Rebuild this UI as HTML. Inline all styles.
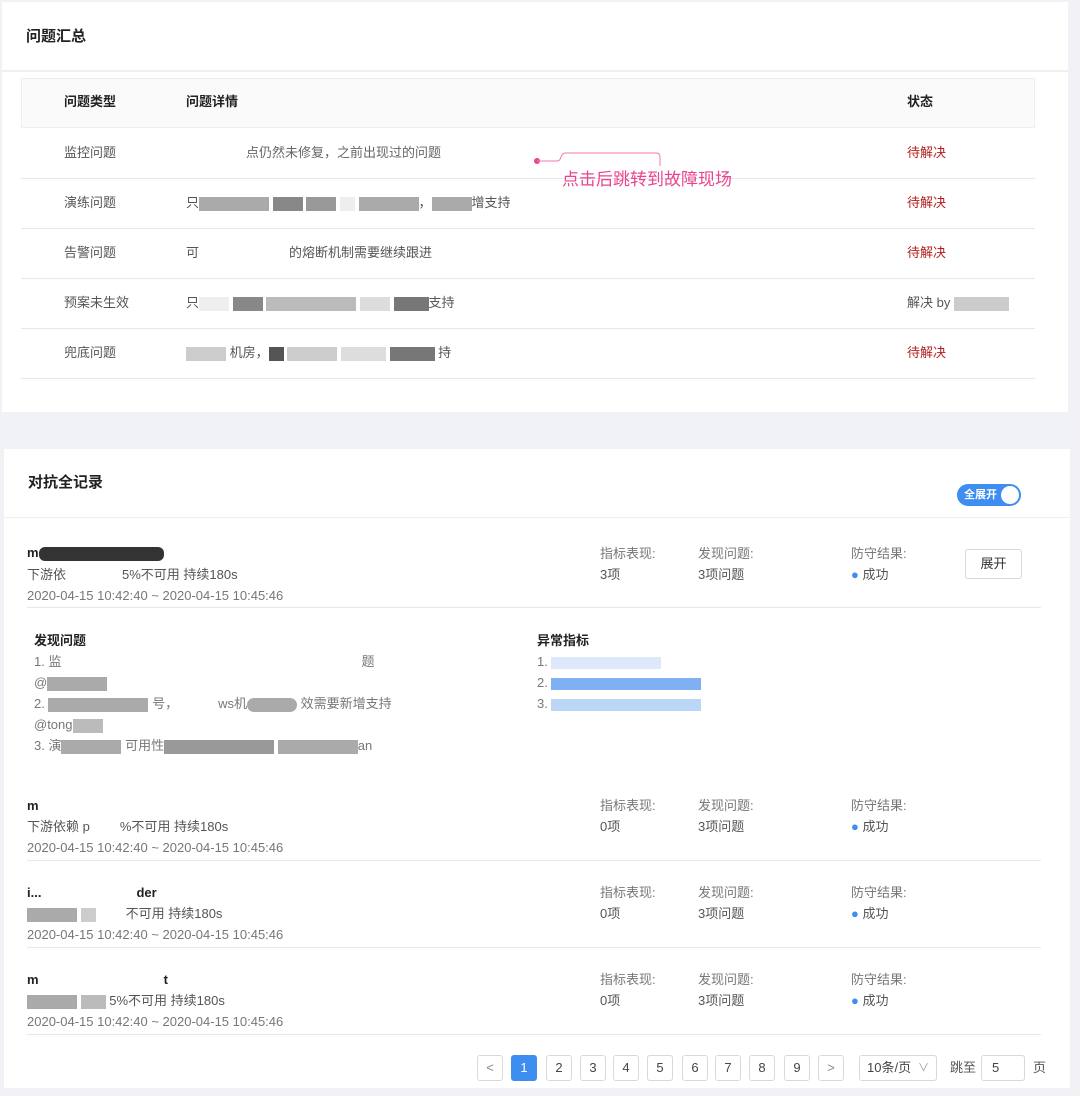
<!DOCTYPE html>
<html><head><meta charset="utf-8"><style>
*{margin:0;padding:0;box-sizing:border-box}
body{width:1080px;height:1096px;background:#f0f2f5;position:relative;overflow:hidden;font-family:"Liberation Sans","Noto Sans CJK SC",sans-serif;font-size:13px;color:#555}
.a{position:absolute;white-space:nowrap;line-height:18px}
.card{position:absolute;background:#fff}
.hl{position:absolute;height:1px;background:#e8e8e8}
.b{font-weight:bold;color:#222}
.red{color:#b0201f}
.m{display:inline-block;height:14px;vertical-align:middle;background:#bbb}
.pg{position:absolute;top:1055px;width:26px;height:26px;border:1px solid #d9d9d9;border-radius:3px;background:#fff;text-align:center;line-height:24px;font-size:13px;color:#444}
.lk{display:inline-block;height:12px;vertical-align:middle;background:#9cc3f5}
</style></head><body>
<div class="card" style="left:2px;top:2px;width:1066px;height:410px"></div>
<div class="a b" style="left:26px;top:28px;font-size:15px">问题汇总</div>
<div class="hl" style="left:2px;top:70px;width:1066px;height:2px;background:#f0f0f0"></div>
<div style="position:absolute;left:21px;top:78px;width:1014px;height:50px;background:#fafafa;border:1px solid #eee"></div>
<div class="a b" style="left:64px;top:93px">问题类型</div>
<div class="a b" style="left:186px;top:93px">问题详情</div>
<div class="a b" style="left:907px;top:93px">状态</div>
<div class="hl" style="left:21px;top:178px;width:1014px"></div>
<div class="hl" style="left:21px;top:228px;width:1014px"></div>
<div class="hl" style="left:21px;top:278px;width:1014px"></div>
<div class="hl" style="left:21px;top:328px;width:1014px"></div>
<div class="hl" style="left:21px;top:378px;width:1014px"></div>
<div class="a" style="left:64px;top:144px">监控问题</div>
<div class="a" style="left:64px;top:194px">演练问题</div>
<div class="a" style="left:64px;top:244px">告警问题</div>
<div class="a" style="left:64px;top:294px">预案未生效</div>
<div class="a" style="left:64px;top:344px">兜底问题</div>
<div class="a" style="left:246px;top:144px;color:#666">点仍然未修复，之前出现过的问题</div>
<div class="a" style="left:186px;top:194px">只<span class="m" style="width:70px;background:#aaa"></span> <span class="m" style="width:30px;background:#888"></span> <span class="m" style="width:30px;background:#999"></span> <span class="m" style="width:15px;background:#eee"></span> <span class="m" style="width:60px;background:#aaa"></span>，<span class="m" style="width:40px;background:#aaa"></span>增支持</div>
<div class="a" style="left:186px;top:244px">可<span style="display:inline-block;width:90px"></span>的熔断机制需要继续跟进</div>
<div class="a" style="left:186px;top:294px">只<span class="m" style="width:30px;background:#eee"></span> <span class="m" style="width:30px;background:#888"></span> <span class="m" style="width:90px;background:#bbb"></span> <span class="m" style="width:30px;background:#ddd"></span> <span class="m" style="width:35px;background:#777"></span>支持</div>
<div class="a" style="left:186px;top:344px"><span class="m" style="width:40px;background:#ccc"></span> 机房，<span class="m" style="width:15px;background:#555"></span> <span class="m" style="width:50px;background:#ccc"></span> <span class="m" style="width:45px;background:#ddd"></span> <span class="m" style="width:45px;background:#777"></span> 持</div>
<div class="a red" style="left:907px;top:144px">待解决</div>
<div class="a red" style="left:907px;top:194px">待解决</div>
<div class="a red" style="left:907px;top:244px">待解决</div>
<div class="a" style="left:907px;top:294px">解决 by <span class="m" style="width:55px;background:#ccc"></span></div>
<div class="a red" style="left:907px;top:344px">待解决</div>
<svg style="position:absolute;left:530px;top:148px" width="140" height="20"><circle cx="7" cy="13" r="3" fill="#e9448f"/><path d="M7 13H27Q30 13 31 9Q32 5 36 5H126Q130 5 130 9V18" fill="none" stroke="#f07ab0" stroke-width="1"/></svg>
<div class="a" style="left:562px;top:169px;font-size:17px;color:#e9448f;line-height:22px">点击后跳转到故障现场</div>

<div class="card" style="left:4px;top:449px;width:1066px;height:639px"></div>
<div class="a b" style="left:28px;top:474px;font-size:15px">对抗全记录</div>
<div style="position:absolute;left:957px;top:484px;width:64px;height:22px;border-radius:11px;background:#3d8ef0"><span style="position:absolute;left:7px;top:3px;color:#fff;font-size:11px;line-height:16px;font-weight:bold">全展开</span><span style="position:absolute;right:2px;top:2px;width:18px;height:18px;border-radius:9px;background:#fff"></span></div>
<div class="hl" style="left:4px;top:517px;width:1066px;background:#eee"></div>

<div class="a b" style="left:27px;top:544px">m<span class="m" style="width:125px;background:#333;border-radius:6px"></span></div>
<div class="a" style="left:27px;top:566px">下游依<span style="display:inline-block;width:56px"></span>5%不可用 持续180s</div>
<div class="a" style="left:27px;top:587px;color:#777">2020-04-15 10:42:40 ~ 2020-04-15 10:45:46</div>
<div class="hl" style="left:27px;top:607px;width:1014px"></div>
<div class="a" style="left:600px;top:545px;color:#777">指标表现:</div><div class="a" style="left:600px;top:566px">3项</div>
<div class="a" style="left:698px;top:545px;color:#777">发现问题:</div><div class="a" style="left:698px;top:566px">3项问题</div>
<div class="a" style="left:851px;top:545px;color:#777">防守结果:</div><div class="a" style="left:851px;top:566px"><span style="color:#3d8ef0">●</span> 成功</div>
<div style="position:absolute;left:965px;top:549px;width:57px;height:30px;border:1px solid #d9d9d9;border-radius:3px;text-align:center;line-height:28px;color:#333">展开</div>

<div class="a b" style="left:34px;top:632px">发现问题</div>
<div class="a" style="left:34px;top:653px;color:#777">1. 监<span style="display:inline-block;width:300px"></span>题</div>
<div class="a" style="left:34px;top:674px;color:#777">@<span class="m" style="width:60px;background:#aaa"></span></div>
<div class="a" style="left:34px;top:695px;color:#777">2. <span class="m" style="width:100px;background:#aaa"></span> 号，<span style="display:inline-block;width:40px"></span>ws机<span class="m" style="width:50px;background:#aaa;border-radius:7px"></span> 效需要新增支持</div>
<div class="a" style="left:34px;top:716px;color:#777">@tong<span class="m" style="width:30px;background:#bbb"></span></div>
<div class="a" style="left:34px;top:737px;color:#777">3. 演<span class="m" style="width:60px;background:#aaa"></span> 可用性<span class="m" style="width:110px;background:#999"></span> <span class="m" style="width:80px;background:#aaa"></span>an</div>
<div class="a b" style="left:537px;top:632px">异常指标</div>
<div class="a" style="left:537px;top:653px;color:#777">1. <span class="lk" style="width:110px;background:#dde9fa"></span></div>
<div class="a" style="left:537px;top:674px;color:#777">2. <span class="lk" style="width:150px;background:#7fb0f3"></span></div>
<div class="a" style="left:537px;top:695px;color:#777">3. <span class="lk" style="width:150px;background:#bcd6f8"></span></div>

<div class="a b" style="left:27px;top:797px">m</div>
<div class="a" style="left:27px;top:818px">下游依赖 p<span style="display:inline-block;width:30px"></span>%不可用 持续180s</div>
<div class="a" style="left:27px;top:839px;color:#777">2020-04-15 10:42:40 ~ 2020-04-15 10:45:46</div>
<div class="hl" style="left:27px;top:860px;width:1014px"></div>
<div class="a" style="left:600px;top:797px;color:#777">指标表现:</div><div class="a" style="left:600px;top:818px">0项</div>
<div class="a" style="left:698px;top:797px;color:#777">发现问题:</div><div class="a" style="left:698px;top:818px">3项问题</div>
<div class="a" style="left:851px;top:797px;color:#777">防守结果:</div><div class="a" style="left:851px;top:818px"><span style="color:#3d8ef0">●</span> 成功</div>

<div class="a b" style="left:27px;top:884px">i...<span style="display:inline-block;width:95px"></span>der</div>
<div class="a" style="left:27px;top:905px"><span class="m" style="width:50px;background:#aaa"></span> <span class="m" style="width:15px;background:#ccc"></span><span style="display:inline-block;width:30px"></span>不可用 持续180s</div>
<div class="a" style="left:27px;top:926px;color:#777">2020-04-15 10:42:40 ~ 2020-04-15 10:45:46</div>
<div class="hl" style="left:27px;top:947px;width:1014px"></div>
<div class="a" style="left:600px;top:884px;color:#777">指标表现:</div><div class="a" style="left:600px;top:905px">0项</div>
<div class="a" style="left:698px;top:884px;color:#777">发现问题:</div><div class="a" style="left:698px;top:905px">3项问题</div>
<div class="a" style="left:851px;top:884px;color:#777">防守结果:</div><div class="a" style="left:851px;top:905px"><span style="color:#3d8ef0">●</span> 成功</div>

<div class="a b" style="left:27px;top:971px">m<span style="display:inline-block;width:125px"></span>t</div>
<div class="a" style="left:27px;top:992px"><span class="m" style="width:50px;background:#aaa"></span> <span class="m" style="width:25px;background:#bbb"></span> 5%不可用 持续180s</div>
<div class="a" style="left:27px;top:1013px;color:#777">2020-04-15 10:42:40 ~ 2020-04-15 10:45:46</div>
<div class="hl" style="left:27px;top:1034px;width:1014px"></div>
<div class="a" style="left:600px;top:971px;color:#777">指标表现:</div><div class="a" style="left:600px;top:992px">0项</div>
<div class="a" style="left:698px;top:971px;color:#777">发现问题:</div><div class="a" style="left:698px;top:992px">3项问题</div>
<div class="a" style="left:851px;top:971px;color:#777">防守结果:</div><div class="a" style="left:851px;top:992px"><span style="color:#3d8ef0">●</span> 成功</div>

<div class="pg" style="left:477px;color:#888">&lt;</div>
<div class="pg" style="left:511px;background:#3d8ef0;border-color:#3d8ef0;color:#fff">1</div>
<div class="pg" style="left:546px">2</div>
<div class="pg" style="left:580px">3</div>
<div class="pg" style="left:613px">4</div>
<div class="pg" style="left:647px">5</div>
<div class="pg" style="left:682px">6</div>
<div class="pg" style="left:715px">7</div>
<div class="pg" style="left:749px">8</div>
<div class="pg" style="left:784px">9</div>
<div class="pg" style="left:818px;color:#888">&gt;</div>
<div class="pg" style="left:859px;width:78px;text-align:left;padding-left:7px">10条/页 <span style="position:absolute;right:7px;color:#999;font-size:11px">∨</span></div>
<div class="a" style="left:950px;top:1059px;color:#555">跳至</div>
<div class="pg" style="left:981px;width:44px;text-align:left;padding-left:10px">5</div>
<div class="a" style="left:1033px;top:1059px;color:#555">页</div>
</body></html>
